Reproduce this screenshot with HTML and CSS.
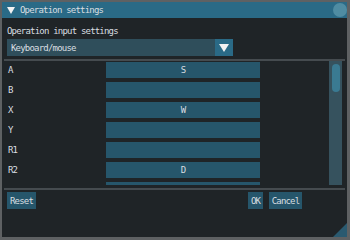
FILE: index.html
```html
<!DOCTYPE html>
<html lang="en">
<head>
    <meta charset="UTF-8">
    <title>Operation settings</title>
    <link rel="stylesheet" href="styles.css">
</head>
<body>
    <div class="window">
        <div class="titlebar">
            <span class="collapse"></span>
            <span class="title">Operation settings</span>
            <span class="close"></span>
        </div>
        <div class="content">
            <div class="heading">Operation input settings</div>
            <div class="combo">
                <span class="combo-value">Keyboard/mouse</span>
                <span class="combo-arrow"></span>
            </div>
            <div class="separator"></div>
            <div class="bindings">
                <div class="list">
                    <div class="row"><span class="key">A</span><button class="btn bind">S</button></div>
                    <div class="row"><span class="key">B</span><button class="btn bind"></button></div>
                    <div class="row"><span class="key">X</span><button class="btn bind">W</button></div>
                    <div class="row"><span class="key">Y</span><button class="btn bind"></button></div>
                    <div class="row"><span class="key">R1</span><button class="btn bind"></button></div>
                    <div class="row"><span class="key">R2</span><button class="btn bind">D</button></div>
                    <div class="row"><span class="key"></span><button class="btn bind"></button></div>
                </div>
                <div class="scrollbar"><div class="thumb"></div></div>
            </div>
            <div class="separator"></div>
            <div class="footer">
                <button class="btn reset">Reset</button>
                <span class="spacer"></span>
                <button class="btn ok">OK</button>
                <button class="btn cancel">Cancel</button>
            </div>
        </div>
        <div class="grip"></div>
    </div>
</body>
</html>
```

FILE: styles.css
```css
:root {
    --title: #2a6a86;
    --body: #1f2427;
    --button: #26566b;
    --combo: #2f4e5b;
    --text: #d9dee1;
    --sep: #454b4f;
}

* {
    margin: 0;
    padding: 0;
    box-sizing: border-box;
}

body {
    background: #5e6163;
    font-family: "DejaVu Sans Mono", monospace;
    font-size: 9px;
    letter-spacing: -0.8px;
    color: var(--text);
}

.window {
    position: relative;
    margin: 2px 0 0 2px;
    width: 345px;
    height: 235px;
    background: var(--body);
    display: flex;
    flex-direction: column;
    overflow: hidden;
}

.titlebar {
    height: 16px;
    background: var(--title);
    display: flex;
    align-items: center;
}

.collapse {
    width: 0;
    height: 0;
    border-left: 4px solid transparent;
    border-right: 4px solid transparent;
    border-top: 7px solid #f2f2f2;
    margin: 0 5px;
}

.title {
    flex: 1;
}

.close {
    width: 14px;
    height: 14px;
    border-radius: 50%;
    background: #4f8ca2;
}

.content {
    flex: 1;
    padding: 0 2px;
    display: flex;
    flex-direction: column;
}

.heading {
    margin: 8px 0 0 3px;
    line-height: 11px;
}

.combo {
    margin: 2px 0 0 3px;
    width: 226px;
    height: 17px;
    background: var(--combo);
    display: flex;
    align-items: center;
}

.combo-value {
    flex: 1;
    padding-left: 4px;
}

.combo-arrow {
    width: 18px;
    height: 100%;
    background: var(--title);
    display: flex;
    align-items: center;
    justify-content: center;
}

.combo-arrow::after {
    content: "";
    border-left: 5px solid transparent;
    border-right: 5px solid transparent;
    border-top: 8px solid #f2f2f2;
}

.separator {
    height: 2px;
    background: var(--sep);
    margin-top: 3px;
}

.bindings {
    height: 124px;
    display: flex;
}

.list {
    flex: 1;
    overflow: hidden;
    padding-top: 1px;
}

.row {
    display: grid;
    grid-template-columns: 102px 154px;
    align-items: center;
    height: 16px;
    margin-bottom: 4px;
}

.key {
    padding-left: 4px;
}

.btn {
    font: inherit;
    letter-spacing: inherit;
    color: var(--text);
    background: var(--button);
    border: none;
    height: 16px;
    text-align: center;
}

.scrollbar {
    width: 13px;
    margin-right: 3px;
    background: #36525e;
    padding: 3px 2px 0 3px;
}

.thumb {
    height: 28px;
    border-radius: 4px;
    background: #3a7a92;
}

.footer {
    display: flex;
    margin-top: 2px;
    gap: 6px;
}

.footer .btn {
    height: 17px;
}

.reset {
    margin-left: 3px;
    width: 29px;
}

.spacer {
    flex: 1;
}

.ok {
    width: 15px;
}

.cancel {
    width: 33px;
    margin-right: 43px;
}

.grip {
    position: absolute;
    right: 0;
    bottom: 0;
    width: 0;
    height: 0;
    border-left: 14px solid transparent;
    border-bottom: 14px solid #2a5a70;
}
```
